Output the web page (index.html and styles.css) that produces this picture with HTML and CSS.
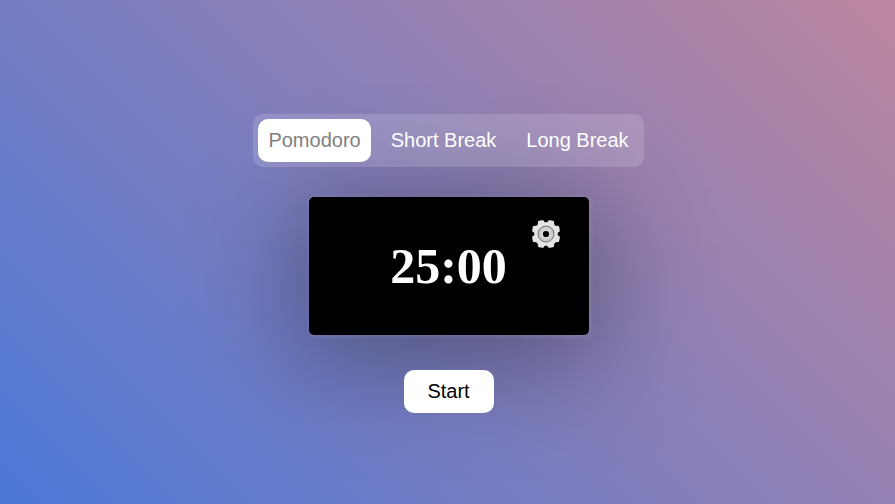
FILE: index.html
```html
<!DOCTYPE html>
<html lang="en">
<head>
<meta charset="utf-8">
<title>Pomodoro Timer</title>
<link rel="stylesheet" href="styles.css">
</head>
<body>
<main class="app">
  <nav class="tabs">
    <button class="tab active">Pomodoro</button>
    <button class="tab">Short Break</button>
    <button class="tab">Long Break</button>
  </nav>
  <section class="timer">
    <div class="time">25:00</div>
    <svg class="gear" viewBox="-14 -14 28 28" aria-hidden="true">
      <g fill="#e4e4e4">
        <path id="quarter" d="M-.2 .2 V-11.7 H1.3 L2.6 -13.8 Q5.8 -14 8 -12.8 L8.2 -10 Q8.6 -8.6 10 -8.2 L12.8 -8 Q14 -5.8 13.8 -2.6 L11.7 -1.3 V.2Z"/>
        <use href="#quarter" transform="rotate(90)"/>
        <use href="#quarter" transform="rotate(180)"/>
        <use href="#quarter" transform="rotate(270)"/>
      </g>
      <circle r="8" fill="#c9c9c9" stroke="#666" stroke-width="0.9"/>
      <circle r="5.4" fill="#d8d8d8"/>
      <circle r="3.1" fill="#000"/>
    </svg>
  </section>
  <button class="start">Start</button>
</main>
</body>
</html>
```
FILE: styles.css
```css
body {
  margin: 0;
  min-height: 100vh;
  overflow: hidden;
  background: linear-gradient(45deg, #4c78d7, #bd869f);
}
.app {
  display: flex;
  flex-direction: column;
  align-items: center;
  padding: 114px 0 0 2px;
}
button {
  margin: 0;
  border: 0;
  height: 43px;
  border-radius: 10px;
  font: 20px/23px "Liberation Sans", Arial, sans-serif;
}
.tabs {
  position: relative;
  z-index: 1;
  display: flex;
  gap: 10px;
  padding: 5px;
  border-radius: 10px;
  background: rgba(255, 255, 255, 0.15);
}
.tab {
  padding: 10px;
  color: #fff;
  background: transparent;
}
.tab.active {
  color: gray;
  background: #fff;
}
.timer {
  position: relative;
  display: flex;
  align-items: center;
  justify-content: center;
  width: 280px;
  height: 138px;
  margin: 30px 0 35px;
  border-radius: 5px;
  background: #000;
  box-shadow: 1px 1px 5px rgba(255, 255, 255, 0.15), 0 16px 110px 10px rgba(0, 0, 0, 0.36);
}
.time {
  color: #fff;
  font: bold 50px/58px "Liberation Serif", "Times New Roman", serif;
}
.gear {
  position: absolute;
  top: 23px;
  right: 29px;
  width: 28px;
  height: 28px;
}
.start {
  position: relative;
  width: 90px;
  color: #000;
  background: #fff;
}
```
